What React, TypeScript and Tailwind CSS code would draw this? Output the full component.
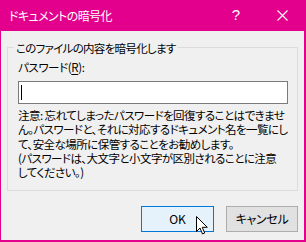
const font = "font-['Noto_Sans_CJK_JP','Noto_Sans',sans-serif] [font-feature-settings:'palt']"

const CloseIcon = () => (
  <svg width="11" height="11" viewBox="0 0 11 11" className="block">
    <path d="M0.5 0.5 L10.5 10.5 M10.5 0.5 L0.5 10.5" stroke="#fff" strokeWidth="1.1" />
  </svg>
)

const Pointer = () => (
  <svg width="13" height="19" viewBox="0 0 13 19" className="absolute left-[196px] top-[216px]">
    <path
      d="M0.5 0.5 L0.5 15.5 L4 12 L6.5 18 L8.7 17 L6.3 11.3 L11.3 11.3 Z"
      fill="#fff"
      stroke="#000"
      strokeWidth="1"
    />
  </svg>
)

export default function App() {
  return (
    <div className={`relative w-[306px] h-[242px] bg-[#e3008c] flex flex-col pl-px pr-[2px] pb-[2px] ${font}`}>
      <div className="h-[31px] -mx-px flex items-center text-white text-[12px] tracking-[-0.6px]">
        <span className="ml-[9px] flex-1">ドキュメントの暗号化</span>
        <span className="w-[46px] text-center text-[15px] tracking-normal font-['Liberation_Sans',sans-serif]">?</span>
        <span className="w-[46px] flex justify-center">
          <CloseIcon />
        </span>
      </div>
      <div className="flex-1 bg-[#f0f0f0] flex flex-col text-[11.5px] text-black">
        <div className="relative mt-[16px] mx-[6px] border border-[#dcdcdc] pt-[11px] px-[10px] pb-[11px]">
          <span className="absolute left-[6px] top-[-8px] px-[2px] bg-[#f0f0f0] leading-[16px] tracking-[-0.7px] whitespace-nowrap">
            このファイルの内容を暗号化します
          </span>
          <div className="leading-[16px] tracking-[-0.4px]">
            パスワード(<span className="underline underline-offset-2">R</span>):
          </div>
          <div className="mt-[6px] w-[270px] h-[23px] bg-white border border-[#7a7a7a] flex items-center">
            <span className="ml-[2px] w-px h-[15px] bg-black" />
          </div>
          <p className="mt-[4px] leading-[14.25px] tracking-[-0.55px] whitespace-nowrap">
            注意: 忘れてしまったパスワードを回復することはできませ
            <br />
            ん。パスワードと、それに対応するドキュメント名を一覧にし
            <br />
            て、安全な場所に保管することをお勧めします。
            <br />
            (パスワードは、大文字と小文字が区別されることに注意
            <br />
            してください。)
          </p>
        </div>
        <div className="mt-[15px] mr-[6px] flex justify-end gap-[12px]">
          <button className="w-[73px] h-[26px] bg-[#e5f1fb] border border-[#0078d7] text-[12px] text-black">
            OK
          </button>
          <button className="w-[72px] h-[26px] bg-[#e1e1e1] border border-[#adadad] text-[12px] text-black tracking-[-0.3px]">
            キャンセル
          </button>
        </div>
      </div>
      <Pointer />
    </div>
  )
}
